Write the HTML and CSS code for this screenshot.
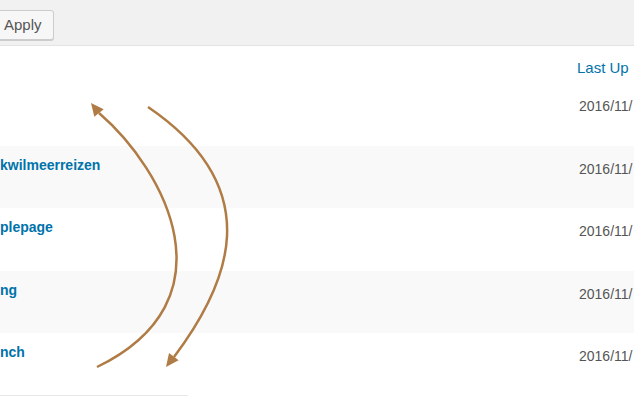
FILE: index.html
```html
<!DOCTYPE html>
<html>
<head>
<meta charset="utf-8">
<link rel="stylesheet" href="styles.css">
</head>
<body>
<div class="page">
  <div class="toolbar">
    <button class="apply">Apply</button>
  </div>
  <div class="table">
    <div class="row head">
      <div class="title"></div>
      <div class="date"><a class="sort">Last Up</a></div>
    </div>
    <div class="row">
      <div class="title"></div>
      <div class="date">2016/11/</div>
    </div>
    <div class="row alt">
      <div class="title"><a>kwilmeerreizen</a></div>
      <div class="date">2016/11/</div>
    </div>
    <div class="row">
      <div class="title"><a>plepage</a></div>
      <div class="date">2016/11/</div>
    </div>
    <div class="row alt">
      <div class="title"><a>ng</a></div>
      <div class="date">2016/11/</div>
    </div>
    <div class="row">
      <div class="title"><a>nch</a></div>
      <div class="date">2016/11/</div>
    </div>
  </div>
  <div class="foot"></div>
  <svg class="arrows" width="634" height="396" viewBox="0 0 634 396">
    <path d="M97 367 C235 300 165 170 99 113" />
    <polygon points="91,103 103.7,109.3 94.3,116.7" />
    <path d="M148 107 C270 190 228 285 174 357" />
    <polygon points="166,367 178.6,360.2 169,353" />
  </svg>
</div>
</body>
</html>
```
FILE: styles.css
```css
html, body {
  margin: 0;
  padding: 0;
  background: #fff;
}
.page {
  position: relative;
  width: 634px;
  height: 396px;
  overflow: hidden;
  font-family: "Liberation Sans", Arial, sans-serif;
}
.toolbar {
  height: 46px;
  background: #f1f1f1;
  border-bottom: 1px solid #e3e3e3;
  display: flex;
  align-items: flex-start;
  padding-top: 10px;
  box-sizing: border-box;
}
.apply {
  margin-left: -8px;
  height: 30px;
  padding: 0 11px;
  border: 1px solid #cccccc;
  border-radius: 3px;
  background: #f7f7f7;
  box-shadow: 0 1px 0 #cccccc;
  font-family: "Liberation Sans", Arial, sans-serif;
  font-size: 15px;
  color: #555;
  line-height: 28px;
}
.table {
  display: flex;
  flex-direction: column;
}
.row {
  display: grid;
  grid-template-columns: 579px 1fr;
  height: 62.5px;
  box-sizing: border-box;
  padding-top: 12px;
}
.row.head {
  height: 37px;
  padding-top: 13px;
}
.row.alt {
  background: #f9f9f9;
}
.title {
  margin-top: -2px;
}
.title a {
  color: #0073aa;
  font-weight: bold;
  font-size: 14px;
  white-space: nowrap;
}
.date {
  font-size: 14px;
  color: #555;
  white-space: nowrap;
  padding-top: 3px;
}
.head .date {
  padding-top: 0;
  margin-left: -2px;
}
.sort {
  color: #0073aa;
  font-size: 15px;
}
.foot {
  width: 188px;
  height: 2px;
  background: #e8e8e8;
  margin-top: -1px;
}
.arrows {
  position: absolute;
  left: 0;
  top: 0;
  pointer-events: none;
}
.arrows path {
  fill: none;
  stroke: #b07c45;
  stroke-width: 2.5;
}
.arrows polygon {
  fill: #b07c45;
}
```
